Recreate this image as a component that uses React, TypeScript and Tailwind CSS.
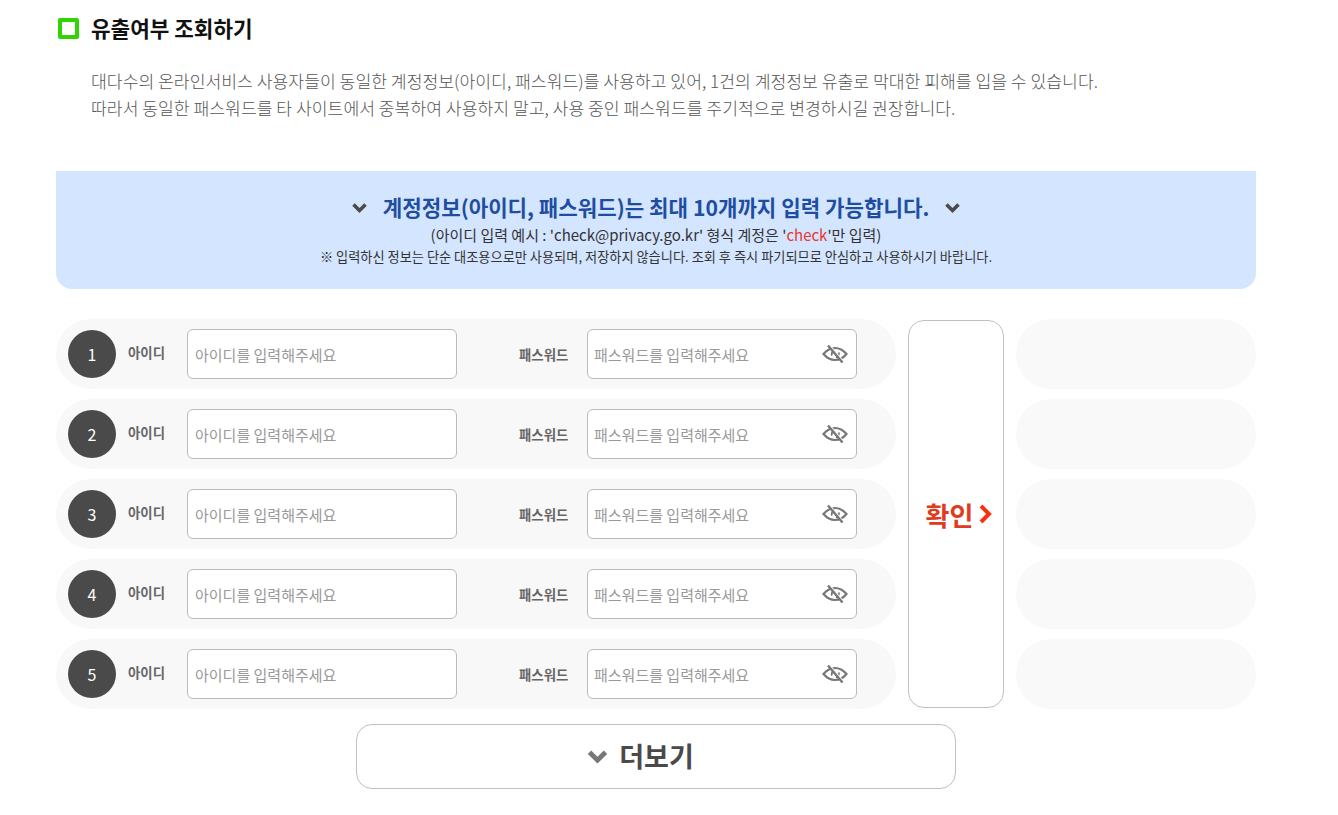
import React from "react";

const rows = [1, 2, 3, 4, 5];

function EyeOff() {
  return (
    <svg width="26" height="20" viewBox="0 0 26 20" fill="none" stroke="#777" strokeWidth="2.200" className="absolute right-[9px] top-[15px]">
      <path d="M1.500 10C4.500 6.500 8.500 4 13 4s8.500 2.500 11.500 6c-3 3.500-7 6-11.500 6S4.500 13.500 1.500 10Z" />
      <path d="M10 11.500a3.500 3.500 0 0 1 3-5" strokeWidth="1.800" />
      <path d="M16.500 8.500a3.500 3.500 0 0 1-2.500 5" strokeWidth="1.800" />
      <path d="M7.500 1l14 16.500" stroke="#fff" strokeWidth="1.200" />
      <path d="M6 1.500l14.500 17" strokeWidth="2.400" />
    </svg>
  );
}

function Chevron({ className, color = "#4a4a4a", width = 3 }: { className?: string; color?: string; width?: number }) {
  return (
    <svg viewBox="0 0 14 10" fill="none" stroke={color} strokeWidth={width} className={className}>
      <path d="M2 2l5 5 5-5" />
    </svg>
  );
}

function Row({ n }: { n: number }) {
  return (
    <div className="flex h-[70px] w-[840px] items-center rounded-[35px] bg-[#f8f8f8] pl-3">
      <span className="flex h-12 w-12 shrink-0 items-center justify-center rounded-full bg-[#4a4a4a] text-base text-white">{n}</span>
      <span className="mb-[4px] ml-[12px] w-[59px] text-[13.400px] font-bold text-[#666]">아이디</span>
      <input
        placeholder="아이디를 입력해주세요"
        className="h-[50px] w-[270px] rounded-[6px] border border-[#bbb] bg-white px-[7px] text-[15px] outline-none placeholder:text-[#999]"
      />
      <span className="ml-[62px] w-[68px] text-[13.400px] font-bold text-[#666]">패스워드</span>
      <div className="relative h-[50px] w-[270px]">
        <input
          placeholder="패스워드를 입력해주세요"
          className="h-full w-full rounded-[6px] border border-[#bbb] bg-white px-[6px] text-[15px] outline-none placeholder:text-[#999]"
        />
        <EyeOff />
      </div>
    </div>
  );
}

export default function App() {
  return (
    <div className="h-[815px] w-[1338px] overflow-hidden bg-white pl-[56px] font-['Noto_Sans_CJK_KR',sans-serif]">
      <div className="w-[1200px]">
        <div className="flex h-[57px] items-center pl-[2px]">
          <span className="mb-[1px] h-[21px] w-[21px] rounded-[2px] border-[4px] border-[#2fd500]" />
          <h2 className="mb-[1px] ml-[12px] text-[21.300px] font-bold text-[#111]">유출여부 조회하기</h2>
        </div>
        <p className="mt-[10px] pl-[35px] text-[17.200px] leading-[27px] font-light text-[#555]">
          대다수의 온라인서비스 사용자들이 동일한 계정정보(아이디, 패스워드)를 사용하고 있어, 1건의 계정정보 유출로 막대한 피해를 입을 수 있습니다.
          <br />
          따라서 동일한 패스워드를 타 사이트에서 중복하여 사용하지 말고, 사용 중인 패스워드를 주기적으로 변경하시길 권장합니다.
        </p>

        <div className="mt-[50px] flex h-[118px] flex-col items-center rounded-b-[16px] bg-[#d3e5ff] pt-[20px]">
          <div className="flex h-[33px] items-center">
            <Chevron className="h-[12px] w-[17px]" />
            <strong className="mx-[15px] mb-[2px] text-[21.200px] font-bold text-[#1f4ea1]">계정정보(아이디, 패스워드)는 최대 10개까지 입력 가능합니다.</strong>
            <Chevron className="h-[12px] w-[17px]" />
          </div>
          <p className="text-[15px] leading-[22px] text-[#333]">
            (아이디 입력 예시 : 'check@privacy.go.kr' 형식 계정은 '<span className="text-[#e8382c]">check</span>'만 입력)
          </p>
          <p className="text-[13.200px] leading-[22px] text-[#333]">※ 입력하신 정보는 단순 대조용으로만 사용되며, 저장하지 않습니다. 조회 후 즉시 파기되므로 안심하고 사용하시기 바랍니다.</p>
        </div>

        <div className="mt-[30px] flex items-start">
          <div className="flex flex-col gap-[10px]">
            {rows.map((n) => (
              <Row key={n} n={n} />
            ))}
          </div>
          <button className="mt-px ml-3 flex h-[388px] w-[96px] items-center justify-center rounded-[16px] border border-[#c0c0c0] bg-white pl-[6px] text-[26px] font-bold text-[#e03a20]">
            확인
            <svg viewBox="0 0 13 20" fill="none" stroke="#f5320f" strokeWidth="4" className="ml-[6px] h-[20px] w-[13px]">
              <path d="M2 2l8 8-8 8" />
            </svg>
          </button>
          <div className="ml-3 flex flex-col gap-[10px]">
            {rows.map((n) => (
              <div key={n} className="h-[70px] w-[240px] rounded-[35px] bg-[#f9f9f9]" />
            ))}
          </div>
        </div>

        <button className="mt-[15px] ml-[300px] flex h-[65px] w-[600px] items-center justify-center rounded-[16px] border border-[#c0c0c0] bg-white pr-[32px] text-[27px] font-bold text-[#4a4a4a]">
          <Chevron className="mr-[10px] h-[16px] w-[23px]" color="#777" width={3} />
          더보기
        </button>
      </div>
    </div>
  );
}
